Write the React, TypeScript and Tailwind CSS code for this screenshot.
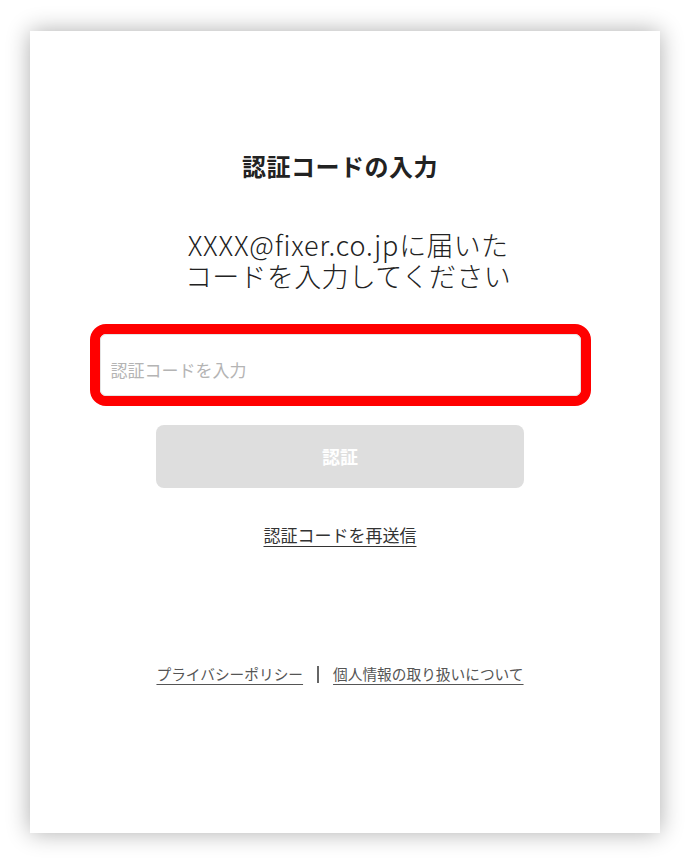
const font = { fontFamily: '"Noto Sans CJK JP", "Noto Sans", sans-serif' };

export default function App() {
  return (
    <div className="min-h-screen bg-white pt-[31px] pl-[30px]" style={font}>
      <div className="w-[630px] h-[802px] bg-white shadow-[0_0_22px_rgba(0,0,0,0.32)] flex flex-col items-center pr-[10px] pt-[118px]">
        {/* title */}
        <h1 className="text-[24px] leading-[34px] font-bold text-[#222] tracking-[0.5px]">
          認証コードの入力
        </h1>

        {/* message */}
        <p className="mt-[46px] pl-[16px] text-[27px] leading-[31px] font-light text-[#222] text-center tracking-[0.3px]">
          <span className="tracking-[0.8px]">XXXX@fixer.co.jp</span>に届いた
          <br />
          コードを入力してください
        </p>

        {/* code input (highlighted) */}
        <div className="mt-[33px] w-[501px] h-[82px] border-[10px] border-[#ff0000] rounded-[16px] bg-white">
          <input
            type="text"
            placeholder="認証コードを入力"
            className="w-full h-full rounded-[6px] border border-[#e4e4e4] px-[10px] pt-[8px] text-[17px] text-[#222] placeholder:text-[#b4b4b4] outline-none"
          />
        </div>

        <button className="mt-[19px] w-[368px] h-[63px] rounded-[8px] bg-[#dedede] text-white text-[18px] font-bold">
          認証
        </button>

        <a href="#" className="mt-[35px] text-[17px] leading-[24px] text-[#333] underline underline-offset-[4px] decoration-[1px]">
          認証コードを再送信
        </a>

        {/* footer links */}
        <div className="mt-[117px] flex items-center text-[14.7px] leading-[20px] text-[#555]">
          <a href="#" className="underline underline-offset-[4px] decoration-[1px]">プライバシーポリシー</a>
          <span className="mx-[14px] w-[2px] h-[17px] bg-[#666]" />
          <a href="#" className="underline underline-offset-[4px] decoration-[1px]">個人情報の取り扱いについて</a>
        </div>
      </div>
    </div>
  );
}
